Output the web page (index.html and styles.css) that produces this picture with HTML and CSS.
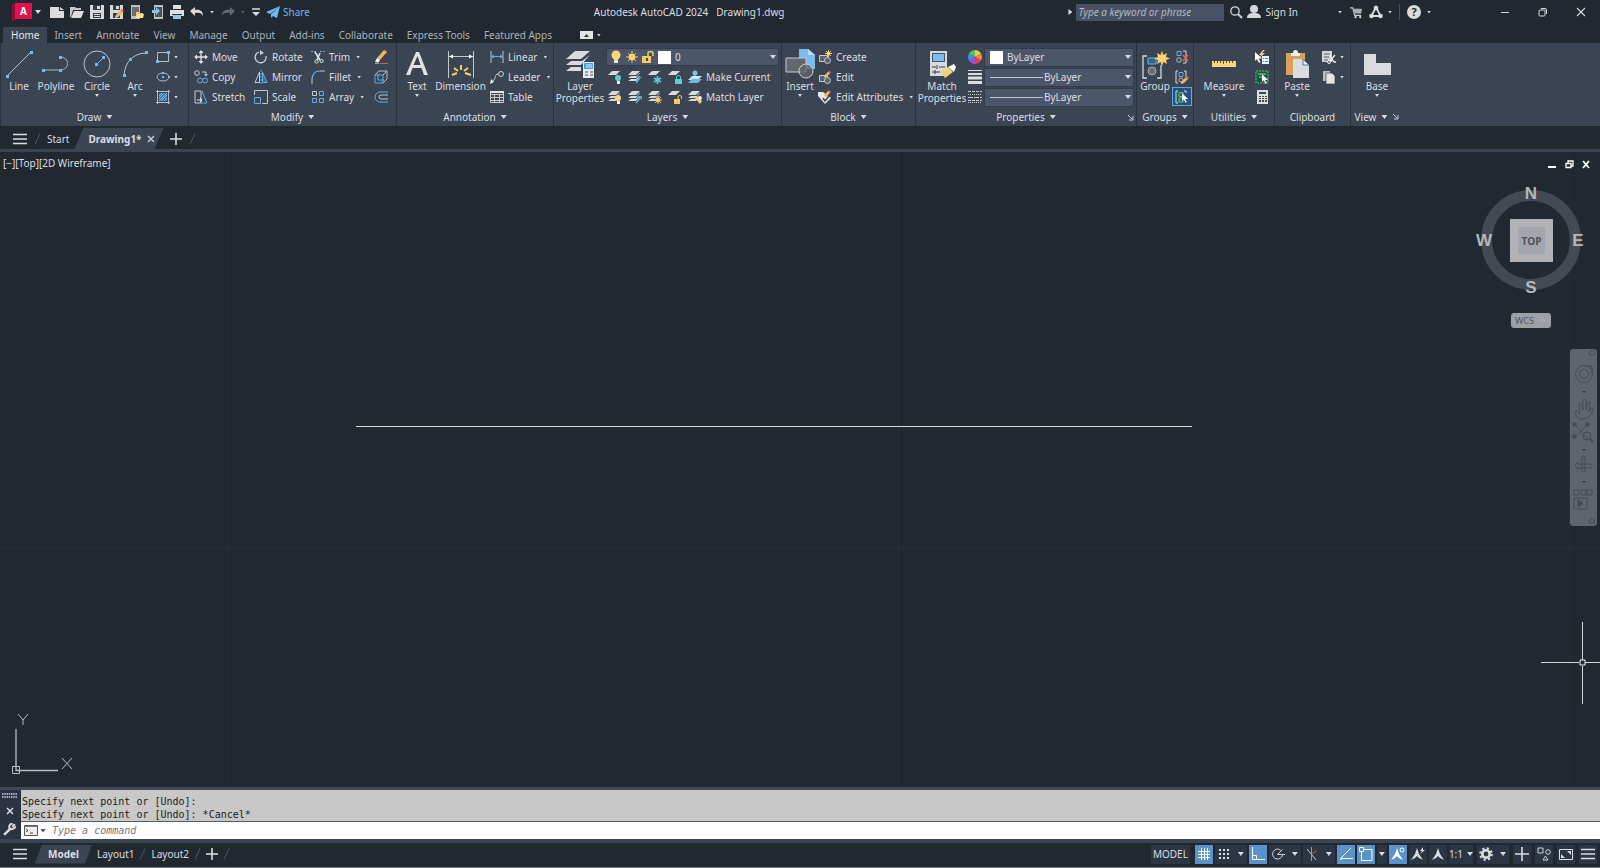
FILE: index.html
```html
<!DOCTYPE html>
<html lang="en">
<head>
<meta charset="utf-8">
<title>Autodesk AutoCAD 2024 - Drawing1.dwg</title>
<link rel="stylesheet" href="styles.css">
</head>
<body>
<svg class="defs" aria-hidden="true">
  <defs>
    <symbol id="lens" viewBox="0 0 14 14"><circle cx="6" cy="6" r="4.2" fill="none" stroke="#d5d7da" stroke-width="1.3"/><path d="M9 9l4 4" stroke="#d5d7da" stroke-width="1.8"/></symbol>
    <symbol id="menu" viewBox="0 0 14 12"><path d="M0 1.500h14M0 6h14M0 10.500h14" stroke="#dcdee0" stroke-width="1.600"/></symbol>
    <symbol id="plus" viewBox="0 0 12 12"><path d="M6 0v12M0 6h12" stroke="#dcdee0" stroke-width="1.600"/></symbol>
    <symbol id="cursor" viewBox="0 0 8 11"><path d="M0 0v9l2-2 2 4 1.500-1-2-3.500H7z" fill="#fff"/></symbol>
    <symbol id="sheets" viewBox="0 0 14 14"><path d="M4 1h8L8 5H0zM3 6h6l2-3 1 0L8 8H0zM3 9h5l3-3h1L8 11H0z" fill="#d8d9db"/></symbol>
    <symbol id="sheet" viewBox="0 0 14 14"><path d="M4 1h8L8 5H0z" fill="#d8d9db"/></symbol>
    <symbol id="pencil" viewBox="0 0 8 8"><path d="M0 8l1-3 2 2z" fill="#f5e4c6"/><path d="M1 5l4-4 2 2-4 4z" fill="#f2b45c"/><path d="M5 1l1-1 2 2-1 1z" fill="#e8654f"/></symbol>
    <symbol id="launch" viewBox="0 0 7 7"><path d="M1 1l4 4M6 2v4H2" fill="none" stroke="#cfd2d6"/></symbol>
  </defs>
</svg>
<div class="app">
  <header class="titlebar">
    <div class="quick">
      <button class="logo" aria-label="Application menu"><svg viewBox="0 0 20 18"><path d="M0 2L4 0h16v16H4l-4 2z" fill="#e51050"/><path d="M0 2L3 0v16l-3 2z" fill="#8e0c33"/></svg><span>A</span></button>
      <span class="caret"></span>
      <button class="q new" aria-label="New"><svg viewBox="0 0 14 14"><path d="M0 2h9v4h5v7H0z" fill="#dcdcdc"/><path d="M10 2l4 3h-4z" fill="#dcdcdc"/></svg></button>
      <button class="q" aria-label="Open"><svg viewBox="0 0 14 14"><path d="M0 2h5l1 1h5v2H3L1 12H0z" fill="#c9c9c9"/><path d="M4 6h10l-3 7H1z" fill="#dcdcdc"/></svg></button>
      <button class="q" aria-label="Save"><svg viewBox="0 0 14 14"><path d="M0 0h14v14H0z" fill="#d8d8d8"/><path d="M3 0h8v5H3zM3 8h8v5H3z" fill="#343d49"/><path d="M7 1h3v3H7zM4 9h6v1H4zM4 11h6v1H4z" fill="#d8d8d8"/></svg></button>
      <button class="q" aria-label="Save as"><svg viewBox="0 0 14 14"><path d="M0 0h13v14H0z" fill="#d8d8d8"/><path d="M3 0h7v5H3zM3 8h7v5H3z" fill="#343d49"/><path d="M6 1h3v3H6z" fill="#d8d8d8"/><use href="#pencil" x="5" y="4" width="9" height="9"/></svg></button>
      <button class="q" aria-label="Open from web"><svg viewBox="0 0 14 14"><path d="M1 0h9v14H1z" fill="#bfc1c4"/><path d="M2 2h7v9H2z" fill="#6c6d6e"/><path d="M6 7h3l1 1h3v5H6z" fill="#f3c667"/><path d="M7 9h7l-1 4H6z" fill="#ffe09a"/></svg></button>
      <button class="q" aria-label="Save to web"><svg viewBox="0 0 14 14"><path d="M4 0h9v14H4z" fill="#bfc1c4"/><path d="M5 2h7v10H5z" fill="#4c5157"/><path d="M2 5h4V2l4 4-4 4V8H2z" fill="#7cc4f4"/></svg></button>
      <button class="q" aria-label="Plot"><svg viewBox="0 0 14 14"><path d="M3 0h8v4H3zM0 5h14v6H0z" fill="#e0e0e0"/><path d="M2 9h10v1H2z" fill="#333"/><path d="M3 10h8v4H3z" fill="#8fc7ea"/></svg></button>
      <button class="q" aria-label="Undo"><svg viewBox="0 0 14 14"><path d="M0 6l5-4v3c5-1 8 1 8 6-1-3-4-4-8-3v3z" fill="#dcdcdc"/></svg></button>
      <span class="caret dot"></span>
      <button class="q dim" aria-label="Redo"><svg viewBox="0 0 14 14"><path d="M14 6L9 2v3C4 4 1 6 1 11c1-3 4-4 8-3v3z" fill="#5f6771"/></svg></button>
      <span class="caret dot dim"></span>
      <button class="q more" aria-label="Customize quick access"><svg viewBox="0 0 8 8"><path d="M0 1h8" stroke="#dcdcdc" stroke-width="1.500"/><path d="M0 4h8L4 8z" fill="#dcdcdc"/></svg></button>
      <button class="share"><svg viewBox="0 0 14 14"><path d="M14 1L0 7l4 2zM14 1L5 9v4l2-2 4 2z" fill="#6fb7ec"/></svg>Share</button>
    </div>
    <h1 class="title"><span>Autodesk AutoCAD 2024</span><span>Drawing1.dwg</span></h1>
    <div class="account">
      <span class="caret right"></span>
      <input class="search" type="text" aria-label="Search" placeholder="Type a keyword or phrase">
      <button class="q" aria-label="Search"><svg><use href="#lens"/></svg></button>
      <button class="signin"><svg viewBox="0 0 14 14"><circle cx="7" cy="4" r="4" fill="#d5d7da"/><path d="M0 13c0-4 3-5 7-5s7 1 7 5z" fill="#d5d7da"/></svg>Sign In</button>
      <span class="caret dot"></span>
      <button class="q cart" aria-label="Store"><svg viewBox="0 0 14 14"><path d="M0 2h3l2 8h7" fill="none" stroke="#c8cace" stroke-width="1.300"/><path d="M4 3h9l-1 5H5z" fill="#a9adb3"/><circle cx="6" cy="12" r="1.200" fill="#ddd"/><circle cx="11" cy="12" r="1.200" fill="#ddd"/></svg></button>
      <button class="q" aria-label="Autodesk App"><svg viewBox="0 0 14 14"><path d="M7 2L2.500 11h9z" fill="none" stroke="#dcdcdc" stroke-width="1.800"/><circle cx="7" cy="3" r="2.300" fill="#dcdcdc"/><circle cx="2.500" cy="11" r="2.300" fill="#dcdcdc"/><circle cx="11.500" cy="11" r="2.300" fill="#dcdcdc"/></svg></button>
      <span class="caret dot"></span>
      <span class="rule"></span>
      <button class="help" aria-label="Help">?</button>
      <span class="caret dot"></span>
      <div class="win">
        <button aria-label="Minimize"><svg viewBox="0 0 10 10"><path d="M1 5.500h8" stroke="#d8dadc"/></svg></button>
        <button aria-label="Restore"><svg viewBox="0 0 10 10"><rect x="1" y="3" width="6" height="6" rx="1" fill="none" stroke="#d8dadc"/><path d="M3 1.500h4q1.500 0 1.500 1.500v4" fill="none" stroke="#d8dadc"/></svg></button>
        <button aria-label="Close"><svg viewBox="0 0 10 10"><path d="M1 1l8 8M9 1l-8 8" stroke="#d8dadc" stroke-width="1.100"/></svg></button>
      </div>
    </div>
  </header>

  <nav class="tabs">
    <button class="on">Home</button><button>Insert</button><button>Annotate</button><button>View</button><button>Manage</button><button>Output</button><button>Add-ins</button><button>Collaborate</button><button>Express Tools</button><button>Featured Apps</button>
    <button class="collapse" aria-label="Minimize ribbon"><svg viewBox="0 0 13 8"><path d="M0 0h13v8H0z" fill="#e3e4e6"/><path d="M4 6l2.500-3L9 6z" fill="#333"/></svg><span class="caret dot"></span></button>
  </nav>

  <main class="ribbon">
    <section class="panel draw">
      <div class="body">
        <button class="big"><svg viewBox="0 0 30 30"><path d="M3 27L27 3" stroke="#c3c6ca"/><path d="M2 26h3v3H2zM26 2h3v3h-3z" fill="#78b9ec"/></svg>Line</button>
        <button class="big wide"><svg viewBox="0 0 30 30"><path d="M3 21h16c10 0 10-13 0-13" fill="none" stroke="#b3b7bd"/><path d="M1 20h3v3H1zM18 20h3v3h-3zM18 7h3v3h-3z" fill="#78b9ec"/></svg>Polyline</button>
        <button class="big circ"><svg viewBox="0 0 30 30"><circle cx="15" cy="15" r="13" fill="none" stroke="#c3c6ca"/><path d="M15 15l6-6" stroke="#78b9ec"/><path d="M13 14h3v3h-3zM20 7h3v3h-3z" fill="#78b9ec"/></svg>Circle<span class="caret dot"></span></button>
        <button class="big"><svg viewBox="0 0 30 30"><path d="M4 26C5 13 13 4 27 4" fill="none" stroke="#c3c6ca"/><path d="M3 25h3v3H3zM9 9h3v3H9zM25 2h3v3h-3z" fill="#78b9ec"/></svg>Arc<span class="caret dot"></span></button>
        <div class="col tight">
          <button class="sm" aria-label="Rectangle"><svg viewBox="0 0 14 14"><path d="M1.500 2.500h11v9h-11z" fill="none" stroke="#b9bdc2"/><path d="M0 10h3v3H0zM11 1h3v3h-3z" fill="#78b9ec"/></svg><span class="caret dot"></span></button>
          <button class="sm" aria-label="Ellipse"><svg viewBox="0 0 14 14"><ellipse cx="7" cy="7" rx="6" ry="4" fill="none" stroke="#b9bdc2"/><path d="M6 6h2v2H6zM6 2h2v2H6zM12 6h2v2h-2z" fill="#78b9ec"/></svg><span class="caret dot"></span></button>
          <button class="sm" aria-label="Hatch"><svg viewBox="0 0 14 14"><path d="M3 3h8v8H3z" fill="#3f77a8"/><path d="M1.500 0v14M12.500 0v14M0 1.500h14M0 12.500h14" stroke="#b9bdc2"/><path d="M3 6l3-3M3 11l8-8M8 11l3-3M3 8l5-5M5 11l6-6" stroke="#6fb7ec"/></svg><span class="caret dot"></span></button>
        </div>
      </div>
      <h2>Draw<span class="caret"></span></h2>
    </section>

    <section class="panel modify">
      <div class="body">
        <div class="col c1">
          <button class="sm"><svg viewBox="0 0 14 14"><path d="M7 2v10M2 7h10" stroke="#e1e2e4" stroke-width="1.300"/><path d="M4.500 3L7 0l2.500 3zM4.500 11L7 14l2.500-3zM3 4.500L0 7l3 2.500zM11 4.500L14 7l-3 2.500z" fill="#e1e2e4"/></svg>Move</button>
          <button class="sm"><svg viewBox="0 0 14 14"><circle cx="3" cy="3" r="2.300" fill="none" stroke="#ccc"/><path d="M8 2h4v4M10.500 4L12 6l1.500-2" fill="none" stroke="#ccc"/><circle cx="6" cy="10.500" r="2.500" fill="none" stroke="#65aee6"/><circle cx="11" cy="10.500" r="2.500" fill="none" stroke="#65aee6"/></svg>Copy</button>
          <button class="sm"><svg viewBox="0 0 14 14"><path d="M1 1h6v12H1z" fill="none" stroke="#ccc"/><path d="M8 1l5 12H7" fill="none" stroke="#65aee6"/><path d="M3 10h5M6 8l2 2-2 2" fill="none" stroke="#eee"/></svg>Stretch</button>
        </div>
        <div class="col c2">
          <button class="sm"><svg viewBox="0 0 14 14"><path d="M5 2a5.500 5.500 0 1 0 7 4" fill="none" stroke="#d0d2d5" stroke-width="1.300"/><path d="M6 0v5l4-2z" fill="#d0d2d5"/></svg>Rotate</button>
          <button class="sm"><svg viewBox="0 0 14 14"><path d="M5.500 2v10.500H1z" fill="none" stroke="#c5c8cc"/><path d="M8.500 2v10.500H13z" fill="#2f6da6" stroke="#65aee6"/><path d="M7 0v14" stroke="#65aee6" stroke-dasharray="2 1"/></svg>Mirror</button>
          <button class="sm"><svg viewBox="0 0 14 14"><path d="M.5 5V.5h13v13H8" fill="none" stroke="#c5c8cc"/><path d="M.5 7.500h6v6h-6z" fill="none" stroke="#65aee6"/></svg>Scale</button>
        </div>
        <div class="col c3">
          <button class="sm"><svg viewBox="0 0 14 14"><path d="M0 1.500h6M9 1.500h5" stroke="#65aee6" stroke-dasharray="2 1"/><path d="M4 2l5 8M9 3L6 10" stroke="#e4e5e7" stroke-width="1.500"/><circle cx="5.500" cy="11.500" r="1.600" fill="none" stroke="#e4e5e7"/><circle cx="10.500" cy="11" r="1.600" fill="none" stroke="#e4e5e7"/></svg>Trim<span class="caret dot"></span></button>
          <button class="sm"><svg viewBox="0 0 14 14"><path d="M1 14V9" stroke="#c5c8cc"/><path d="M1 10C1 4 4 1 9 1" fill="none" stroke="#65aee6" stroke-width="1.200"/><path d="M9 1h5" stroke="#c5c8cc"/></svg>Fillet<span class="caret dot"></span></button>
          <button class="sm"><svg viewBox="0 0 14 14"><path d="M1.500 1.500h4v4h-4z" fill="none" stroke="#ccc"/><path d="M8.500 1.500h4v4h-4zM1.500 8.500h4v4h-4zM8.500 8.500h4v4h-4z" fill="none" stroke="#65aee6"/></svg>Array<span class="caret dot"></span></button>
        </div>
        <div class="col">
          <button class="sm" aria-label="Erase"><svg viewBox="0 0 14 14"><path d="M3 8l7-8 3 2-7 8z" fill="#f2b45c"/><path d="M10 0l1-0 2 1.500-0.500 1z" fill="#e8654f"/><path d="M3 8l3 2-1.500 2.500L1 12z" fill="#fff"/><path d="M1 13.500h4" stroke="#65aee6"/><path d="M6 13.500h8" stroke="#e65b4c"/></svg></button>
          <button class="sm" aria-label="Explode"><svg viewBox="0 0 14 14"><path d="M1 5h8v8H1z" fill="none" stroke="#65aee6"/><path d="M1 5l4-4h8v8l-4 4M9 5l4-4" fill="none" stroke="#bfc2c7"/><path d="M4 4v6h6" fill="none" stroke="#65aee6"/></svg></button>
          <button class="sm" aria-label="Offset"><svg viewBox="0 0 14 14"><path d="M14 2H6a5 5 0 0 0 0 10h8" fill="none" stroke="#65aee6"/><path d="M14 5H7a2 2 0 0 0 0 4h7" fill="none" stroke="#c5c8cc"/></svg></button>
        </div>
      </div>
      <h2>Modify<span class="caret"></span></h2>
    </section>

    <section class="panel annotation">
      <div class="body">
        <button class="big text"><svg viewBox="0 0 30 30"><path d="M14 3h3l9 23h-4l-2.500-7h-9L8 26H4zm1.500 4L11.500 16h7z" fill="#e1e2e4"/></svg>Text<span class="caret dot"></span></button>
        <button class="big dimn"><svg viewBox="0 0 30 30"><path d="M2.500 2v27M27.500 2v27M3 7.500h24" stroke="#c5c8cc"/><path d="M3 7.500l4-2v4zM27 7.500l-4-2v4z" fill="#fff"/><path d="M6 26l5-2M8 19l4 3M15 16v5M22 19l-4 3M25 26l-6-2" stroke="#f6cf6b" stroke-width="2"/></svg>Dimension</button>
        <div class="col">
          <button class="sm"><svg viewBox="0 0 14 14"><path d="M1 1v12M13 1v12" stroke="#c5c8cc"/><path d="M1 6.500h12" stroke="#65aee6"/><path d="M1 6.500l3-2v4zM13 6.500l-3-2v4z" fill="#65aee6"/></svg>Linear<span class="caret dot"></span></button>
          <button class="sm"><svg viewBox="0 0 14 14"><circle cx="11" cy="4" r="2.500" fill="none" stroke="#ccc"/><path d="M8.500 4C4 4 7 8 2 12" fill="none" stroke="#ccc"/><path d="M0 14l1-5 3 3z" fill="#eee"/></svg>Leader<span class="caret dot"></span></button>
          <button class="sm"><svg viewBox="0 0 14 14"><path d="M.5 1.500h13v11H.5zM.5 4.500h13M.5 7.500h13M.5 10.500h13M4.500 4v9M9.500 4v9" fill="none" stroke="#c9cbcf"/><path d="M0 1h14v2H0z" fill="#e3e4e6"/></svg>Table</button>
        </div>
      </div>
      <h2>Annotation<span class="caret"></span></h2>
    </section>

    <section class="panel layers">
      <div class="body">
        <button class="big lp"><svg viewBox="0 0 30 30"><path d="M10 2h15l-9 8H1zM6 12h11l8-6-9 10H1zM6 18h10v4H1z" fill="#dadbdd"/><path d="M18 13h11v16H18z" fill="#e9eaeb"/><path d="M19 14h9v6h-9z" fill="#4f9fdc"/><path d="M21 15h6v4h-6z" fill="#8cc8f4"/><path d="M20 23h3M25 23h3M20 26h3M25 26h3" stroke="#454e5b"/></svg>Layer Properties</button>
        <div class="stack">
          <div class="combo layer">
            <svg viewBox="0 0 12 14"><circle cx="6" cy="5" r="4.500" fill="#ffd778"/><path d="M4 9h4v2H4z" fill="#ffd778"/><path d="M4 11h4v2H4z" fill="#e4e5e7"/></svg>
            <svg viewBox="0 0 12 14"><circle cx="6" cy="7" r="3.300" fill="#ffd778"/><path d="M6 1v12M0 7h12M2 3l8 8M10 3l-8 8" stroke="#f6c968"/></svg>
            <svg viewBox="0 0 12 14"><path d="M0 6h9v7H0z" fill="#f6c968"/><path d="M6 6V3.500q0-2 2.500-2t2.500 2V6" fill="none" stroke="#f6c968" stroke-width="1.500"/><path d="M4 8h2v3H4z" fill="#51452c"/></svg>
            <span class="swatch"></span>
            <select aria-label="Layer"><option>0</option></select><span class="caret"></span>
          </div>
          <div class="toolrow">
            <button class="sm" aria-label="Off"><svg viewBox="0 0 14 14"><use href="#sheet"/><circle cx="10" cy="8" r="3" fill="#62cbd1"/><path d="M9 11h3v3H9z" fill="#d8f3f3"/></svg></button>
            <button class="sm" aria-label="Isolate"><svg viewBox="0 0 14 14"><use href="#sheets"/><path d="M14 6l-5 7-1 0 0-3z" fill="#6bb3ea"/></svg></button>
            <button class="sm" aria-label="Freeze"><svg viewBox="0 0 14 14"><use href="#sheet"/><path d="M9.500 6v8M6 8l7 4M13 8l-7 4" stroke="#62cbd1" stroke-width="1.700"/></svg></button>
            <button class="sm" aria-label="Lock"><svg viewBox="0 0 14 14"><use href="#sheet"/><path d="M7 9h7v5H7z" fill="#62cbd1"/><path d="M8.500 9V7q0-1.500 2-1.500t2 1.500v2" fill="none" stroke="#62cbd1"/></svg></button>
            <button class="sm"><svg viewBox="0 0 14 14"><path d="M4 6h10l-4 4H0z" fill="#c6e4fa"/><path d="M4 9h10l-4 4H0z" fill="#71b6ea"/><circle cx="7" cy="3" r="2.500" fill="#81c0ee"/><path d="M4 7q3-3 6 0z" fill="#eee"/></svg>Make Current</button>
          </div>
          <div class="toolrow">
            <button class="sm" aria-label="Turn all on"><svg viewBox="0 0 14 14"><use href="#sheets"/><circle cx="10" cy="8" r="3" fill="#ffd778"/><path d="M9 11h3v3H9z" fill="#eee"/></svg></button>
            <button class="sm" aria-label="Unisolate"><svg viewBox="0 0 14 14"><use href="#sheets"/><path d="M8 13l5-6M10 7h4v3" fill="none" stroke="#6bb3ea" stroke-width="1.300"/></svg></button>
            <button class="sm" aria-label="Thaw"><svg viewBox="0 0 14 14"><use href="#sheets"/><circle cx="10" cy="10" r="2" fill="#ffd778"/><path d="M10 6v8M6 10h8M7 7l6 6M13 7l-6 6" stroke="#f6c968"/></svg></button>
            <button class="sm" aria-label="Unlock"><svg viewBox="0 0 14 14"><use href="#sheet"/><path d="M6 9h6v5H6z" fill="#f6c968"/><path d="M10 9V7q0-1.500 1.700-1.500T13.500 7v2" fill="none" stroke="#f6c968"/></svg></button>
            <button class="sm"><svg viewBox="0 0 14 14"><use href="#sheets"/><path d="M6 7l3-1 5 5-2 3z" fill="#f3d277"/><path d="M10 7l3-1 1 3-2 1z" fill="#fff"/></svg>Match Layer</button>
          </div>
        </div>
      </div>
      <h2>Layers<span class="caret"></span></h2>
    </section>

    <section class="panel block">
      <div class="body">
        <button class="big ins"><svg viewBox="0 0 30 30"><path d="M14 0h9l7 6v14H14z" fill="#7cbcec"/><path d="M23 0l7 6h-7z" fill="#b8dcf7"/><path d="M1 9h20v14H1z" fill="#62676e" stroke="#c8cacd"/><circle cx="21" cy="22" r="7" fill="#62676e" fill-opacity=".8" stroke="#d0d2d4"/></svg>Insert<span class="caret dot"></span></button>
        <div class="col">
          <button class="sm"><svg viewBox="0 0 14 14"><path d="M1.500 5.500h8v6h-8z" fill="#5d636b" stroke="#c8cacd"/><circle cx="9.500" cy="10.500" r="3" fill="#5d636b" stroke="#c8cacd"/><path d="M10.500 0v7M7 3.500h7M8 1l5 5M13 1L8 6" stroke="#f8d47a"/></svg>Create</button>
          <button class="sm"><svg viewBox="0 0 14 14"><path d="M1.500 5.500h8v6h-8z" fill="#5d636b" stroke="#c8cacd"/><circle cx="9.500" cy="10.500" r="3" fill="#5d636b" stroke="#c8cacd"/><use href="#pencil" x="6" width="7" height="8"/></svg>Edit</button>
          <button class="sm"><svg viewBox="0 0 14 14"><path d="M0 2h5l8 6-6 6-7-8z" fill="#e5e6e8"/><path d="M5 8l2 3 4-5" fill="none" stroke="#3b4453" stroke-width="1.500"/><use href="#pencil" x="5" width="8" height="8"/></svg>Edit Attributes<span class="caret dot"></span></button>
        </div>
      </div>
      <h2>Block<span class="caret"></span></h2>
    </section>

    <section class="panel props">
      <div class="body">
        <button class="big lp"><svg viewBox="0 0 30 30"><path d="M3 2h17v25H3z" fill="#d9dadc"/><path d="M5 4h13v9H5z" fill="#405a72"/><path d="M6 5h11v7H6z" fill="#7dbcec"/><path d="M5 18h4M12 18h6M5 23h8M10 16v4M8 21v4" stroke="#333c48"/><path d="M14 23l7-5 5 5-8 6z" fill="#f3d277"/><path d="M21 18l6-3 2 3-2 5z" fill="#fff"/></svg>Match Properties</button>
        <div class="stack">
          <div class="proprow"><svg viewBox="0 0 14 14"><path d="M7 7V0a7 7 0 0 1 6 3.500z" fill="#f6c543"/><path d="M7 7l6-3.500a7 7 0 0 1 0 7z" fill="#f28b2c"/><path d="M7 7l6 3.500A7 7 0 0 1 7 14z" fill="#e5395d"/><path d="M7 7v7a7 7 0 0 1-6-3.500z" fill="#a04fd6"/><path d="M7 7l-6 3.500a7 7 0 0 1 0-7z" fill="#3596e8"/><path d="M7 7L1 3.500A7 7 0 0 1 7 0z" fill="#5fc24f"/></svg>
            <div class="combo color"><span class="swatch"></span><select aria-label="Object color"><option>ByLayer</option></select><span class="caret"></span></div></div>
          <div class="proprow"><svg viewBox="0 0 14 14"><path d="M0 .5h14" stroke="#ddd"/><path d="M0 4h14" stroke="#ddd" stroke-width="2"/><path d="M0 8h14M0 12.500h14" stroke="#ddd" stroke-width="3"/></svg>
            <div class="combo"><span class="sample"></span><select aria-label="Lineweight"><option>ByLayer</option></select><span class="caret"></span></div></div>
          <div class="proprow"><svg viewBox="0 0 14 14"><path d="M0 1.500h14M0 10.500h14" stroke="#ccc" stroke-dasharray="3 1"/><path d="M0 4.500h14M0 12.500h14" stroke="#ccc" stroke-dasharray="1 1"/><path d="M0 7.500h14" stroke="#ccc" stroke-dasharray="5 1"/></svg>
            <div class="combo"><span class="sample"></span><select aria-label="Linetype"><option>ByLayer</option></select><span class="caret"></span></div></div>
        </div>
      </div>
      <h2>Properties<span class="caret"></span><button class="corner" aria-label="Properties palette"><svg><use href="#launch"/></svg></button></h2>
    </section>

    <section class="panel groups">
      <div class="body">
        <button class="big grp"><svg viewBox="0 0 30 30"><path d="M7 7H3v22h4M17 29h4V16" fill="none" stroke="#d6d8da" stroke-width="1.300"/><path d="M8 9h8v6H8z" fill="#35608a" stroke="#65aee6"/><circle cx="12" cy="22" r="4" fill="#6c7177" stroke="#aaa"/><path d="M22 2l1.500 4L27 4l-1 4 4 1.500-4 1.500 1 4-3.500-2L22 17l-1.500-4L17 15l1-4-4-1.500L18 8l-1-4 3.500 2z" fill="#fbd273"/></svg>Group</button>
        <div class="col">
          <button class="sm" aria-label="Ungroup"><svg viewBox="0 0 14 14"><path d="M2 1.500h4v4H2z" fill="none" stroke="#65aee6"/><circle cx="4" cy="10" r="2.300" fill="none" stroke="#bbb"/><path d="M8 1h3v12H8" fill="none" stroke="#ddd"/><path d="M8 5l5 6M13 5l-5 6" stroke="#e65b5b" stroke-width="1.500"/></svg></button>
          <button class="sm" aria-label="Group edit"><svg viewBox="0 0 14 14"><path d="M3 1H1v12h2M9 1h2v6" fill="none" stroke="#ddd"/><path d="M4 2.500h4v4H4z" fill="none" stroke="#65aee6"/><circle cx="6" cy="10" r="2" fill="none" stroke="#bbb"/><use href="#pencil" x="6" y="6" width="8" height="8"/></svg></button>
          <button class="sm hot" aria-label="Group selection"><svg viewBox="0 0 14 14"><path d="M3 1H1v12h2M9 1h2v2" fill="none" stroke="#ddd"/><path d="M4 2.500h4v4H4zM4 8h4v4H4z" fill="#246b45" stroke="#5ac985"/><use href="#cursor" x="7" y="3" width="7" height="10"/></svg></button>
        </div>
      </div>
      <h2>Groups<span class="caret"></span></h2>
    </section>

    <section class="panel utils">
      <div class="body">
        <button class="big meas"><svg viewBox="0 0 30 30"><path d="M3 12h24v6H3z" fill="#f8d47a"/><path d="M5.500 12v2M8.500 12v2M11.500 12v2M14.500 12v3M17.500 12v2M20.500 12v2M23.500 12v2" stroke="#5e553f"/></svg>Measure<span class="caret dot"></span></button>
        <div class="col">
          <button class="sm" aria-label="Quick select"><svg viewBox="0 0 14 14"><path d="M8 0L4 5h2L4 8l6-5H7l3-3z" fill="#f8d47a"/><use href="#cursor" y="2" width="8" height="11"/><path d="M7 6h7v8H7z" fill="#e8f3fb"/><path d="M8 8.500h1M10 8.500h3M8 11.500h1M10 11.500h3" stroke="#3f8fd0"/></svg></button>
          <button class="sm" aria-label="Select all"><svg viewBox="0 0 14 14"><path d="M1 1h12v12H1z" fill="#21563d" stroke="#4fc27c" stroke-dasharray="2 1"/><path d="M3 4h8M4 7h4v3" fill="none" stroke="#4fc27c" stroke-width="1.500"/><use href="#cursor" x="7" y="4" width="7" height="10"/></svg></button>
          <button class="sm" aria-label="Calculator"><svg viewBox="0 0 14 14"><path d="M2 0h11v14H2z" fill="#dedfe1"/><path d="M4 2h7v2H4zM4 6h2v1H4zM7 6h2v1H7zM10 6h2v1h-2zM4 8h2v1H4zM7 8h2v1H7zM10 8h2v1h-2zM4 10h2v2H4zM7 10h2v2H7zM10 10h2v2h-2z" fill="#3f4855"/></svg></button>
        </div>
      </div>
      <h2>Utilities<span class="caret"></span></h2>
    </section>

    <section class="panel clip">
      <div class="body">
        <button class="big"><svg viewBox="0 0 30 30"><path d="M4 4h19v22H4z" fill="#d9a05b"/><path d="M9 4h2q0-3 2.500-3T16 4h2v3H9z" fill="#f0f0f0"/><path d="M11 10h10l6 6v13H11z" fill="#dcdddf"/><path d="M21 10l6 6h-6z" fill="#fff" stroke="#48719a"/></svg>Paste<span class="caret dot"></span></button>
        <div class="col tight">
          <button class="sm" aria-label="Cut"><svg viewBox="0 0 14 14"><path d="M0 1h10v11H0z" fill="#d5d6d8"/><path d="M2 4h6M2 7h6M2 10h4" stroke="#555e6a"/><path d="M7 5l5 7M13 5l-5 6" stroke="#eee" stroke-width="1.300"/><circle cx="7" cy="12" r="1.500" fill="#555e6a" stroke="#eee"/><circle cx="13" cy="12" r="1" fill="#eee"/></svg><span class="caret dot"></span></button>
          <button class="sm" aria-label="Copy"><svg viewBox="0 0 14 14"><path d="M1 1h7v10H1z" fill="#babcbf"/><path d="M4 3h6l3 3v8H4z" fill="#e3e4e6" stroke="#3b4453" stroke-width=".7"/></svg><span class="caret dot"></span></button>
        </div>
      </div>
      <h2>Clipboard</h2>
    </section>

    <section class="panel view">
      <div class="body">
        <button class="big"><svg viewBox="0 0 30 30"><path d="M2 5h12v9h15v12H2z" fill="#d9dadc"/></svg>Base<span class="caret dot"></span></button>
      </div>
      <h2>View<span class="caret"></span><button aria-label="View settings"><svg><use href="#launch"/></svg></button></h2>
    </section>
  </main>

  <nav class="files">
    <button class="burger" aria-label="Tab menu"><svg><use href="#menu"/></svg></button>
    <span class="slash"></span>
    <button>Start</button>
    <div class="active"><span>Drawing1*</span><button aria-label="Close tab"><svg viewBox="0 0 8 8"><path d="M1 1l6 6M7 1L1 7" stroke="#c6c9cd" stroke-width="1.500"/></svg></button></div>
    <button class="add" aria-label="New tab"><svg><use href="#plus"/></svg></button>
    <span class="slash"></span>
  </nav>

  <section class="canvas" aria-label="Drawing area">
    <div class="grid v a"></div><div class="grid v b"></div><div class="grid v c"></div><div class="grid h"></div>
    <div class="viewlabel"><button>[−]</button><button>[Top]</button><button>[2D Wireframe]</button></div>
    <div class="viewwin">
      <button aria-label="Minimize view"><svg viewBox="0 0 9 9"><path d="M0 7h8" stroke="#fff" stroke-width="2"/></svg></button>
      <button aria-label="Restore view"><svg viewBox="0 0 9 9"><path d="M1 3.500h5v4H1zM3 3V1h5v5H6" fill="none" stroke="#fff" stroke-width="1.300"/></svg></button>
      <button aria-label="Close view"><svg viewBox="0 0 9 9"><path d="M1 1l6 7M7 1L1 8" stroke="#fff" stroke-width="1.800"/></svg></button>
    </div>
    <div class="line"></div>
    <div class="cube">
      <span class="n">N</span><span class="w">W</span><span class="e">E</span><span class="s">S</span>
      <button class="top">TOP</button>
    </div>
    <button class="wcs">WCS <svg viewBox="0 0 8 6"><path d="M1 3q3-3 6 0" fill="none" stroke="#b4b7bc"/></svg></button>
    <div class="navbar">
      <svg viewBox="0 0 27 177" fill="none" stroke="#454b55">
        <circle cx="22" cy="4" r="2.500"/><circle cx="22" cy="172" r="2.500"/>
        <circle cx="14" cy="25" r="8.500"/><circle cx="14" cy="25" r="4.500"/><path d="M17 17h5v7"/>
        <path d="M12 42h4l-2 2zM12 100h4l-2 2zM12 132h4l-2 2z" fill="#30363f" stroke="none"/>
        <path d="M9 70c-4-4-5-7-3-8 2 0 3 3 4 3l-1-10c1-2 2-1 3 1l1 5V52c1-2 3-2 3 0v9l2-8c2-1 3 0 2 2l-1 8 2-4c2-1 3 0 2 2-2 6-4 9-14 9z"/>
        <path d="M5 76l13 14M17 76L5 88"/><path d="M3 74h3v3H3zM16 74h3v3h-3zM3 86h3v3H3z" fill="#454b55"/><circle cx="17" cy="87" r="4"/><path d="M20 90l3 3" stroke-width="2"/>
        <path d="M12 108q2-2 3 0v14q-1 3-3 0zM5 116l3-3v2h12q4 1 1 4H8v2z"/>
        <path d="M4 141h5v5H4zM11 141h5v5h-5zM17 141h5v5h-5zM4 149h13v11H4z"/><path d="M8 151v7l5-3.500z" fill="#454b55"/>
      </svg>
    </div>
    <svg class="cross" viewBox="0 0 59 82"><path d="M0 40.500h38M44 40.500h16M41.500 0v38M41.500 44v38" stroke="#d2d4d6"/><path d="M39 38h5v5h-5z" fill="none" stroke="#f0f0f0"/></svg>
    <svg class="ucs" viewBox="0 0 70 64" fill="none" stroke="#b8bbbf"><path d="M8 17v41.500h42" stroke-width="1.300"/><path d="M4.500 54.500h7v7h-7z"/><path d="M10 2l5 6 5-6M15 8v5M54 46l10 11M64 46L54 57"/></svg>
  </section>

  <section class="command">
    <div class="grip">
      <svg viewBox="0 0 15 5"><path d="M0 1h15M0 4h15" stroke="#cfd1d4" stroke-width="1.500" stroke-dasharray="1.500 .75"/></svg>
      <button aria-label="Close"><svg viewBox="0 0 8 8"><path d="M1 1l6 6M7 1L1 7" stroke="#dcdee0" stroke-width="1.500"/></svg></button>
      <button aria-label="Customize"><svg viewBox="0 0 12 12"><path d="M1 11l6-6" stroke="#dcdee0" stroke-width="2.200"/><path d="M11 1L8.500 3.500M9 0.500Q5 1 6 5q3 2 6-2" fill="none" stroke="#dcdee0" stroke-width="1.800"/></svg></button>
    </div>
    <div class="console">
      <pre>Specify next point or [Undo]:
Specify next point or [Undo]: *Cancel*</pre>
      <div class="prompt">
        <button aria-label="Recent commands"><svg viewBox="0 0 14 11"><path d="M.5.500h13v10H.5z" fill="#eee" stroke="#555"/><path d="M1 1.500h12" stroke="#777"/><path d="M2 4l2 1.500L2 7M6 8h3" fill="none" stroke="#444"/></svg><span class="caret"></span></button>
        <input type="text" aria-label="Command" placeholder="Type a command">
      </div>
    </div>
  </section>

  <footer class="status">
    <nav class="layouts">
      <button class="burger" aria-label="Layout menu"><svg><use href="#menu"/></svg></button>
      <button class="model">Model</button>
      <button>Layout1</button><span class="slash"></span>
      <button>Layout2</button><span class="slash"></span>
      <button class="add" aria-label="New layout"><svg><use href="#plus"/></svg></button><span class="slash"></span>
    </nav>
    <div class="modes">
      <button class="space">MODEL</button>
      <button class="hl" aria-label="Grid"><svg viewBox="0 0 14 14"><path d="M4.500 1v12M7.500 1v12M10.500 1v12M1 4.500h12M1 7.500h12M1 10.500h12" stroke="#fff"/></svg></button>
      <button class="dd" aria-label="Snap"><svg viewBox="0 0 14 14"><path d="M2 3h12M2 7h12M2 11h12" stroke="#dcdee0" stroke-width="2" stroke-dasharray="2 2"/></svg><span class="caret"></span></button>
      <button class="hl" aria-label="Ortho"><svg viewBox="0 0 14 14"><path d="M1.500 0v12.500H14M1.500 8.500h4v4" fill="none" stroke="#fff"/></svg></button>
      <button class="dd" aria-label="Polar"><svg viewBox="0 0 14 14"><path d="M11.500 8a5 5 0 1 1-2-5M6.500 7.500l5-5M6.500 7.500H14" fill="none" stroke="#cfd1d4"/></svg><span class="caret"></span></button>
      <button class="dd" aria-label="Isometric"><svg viewBox="0 0 14 14"><path d="M6.500 0v14" stroke="#88a888"/><path d="M2 2l9 11" stroke="#c7c9cc"/><path d="M6 7l6-3" stroke="#b1655c"/></svg><span class="caret"></span></button>
      <button class="hl" aria-label="Tracking"><svg viewBox="0 0 14 14"><path d="M12 1L1.500 11.500H14" fill="none" stroke="#fff"/><path d="M1 11h2v2H1z" fill="#b8ecc5"/></svg></button>
      <button class="hl" aria-label="Object snap"><svg viewBox="0 0 14 14"><path d="M5 2.500h8v11H2.500V5" fill="none" stroke="#fff"/><path d="M.5.500h4v4h-4z" fill="none" stroke="#fff"/></svg></button>
      <button class="only" aria-label="Object snap options"><span class="caret"></span></button>
      <button class="hl" aria-label="Annotation visibility"><svg viewBox="0 0 14 14"><path d="M6 1l2 6 4 6-4-2-2-2-2 2-4 2 4-6z" fill="#fff"/><circle cx="11" cy="3" r="2" fill="none" stroke="#fff"/></svg></button>
      <button aria-label="Auto scale"><svg viewBox="0 0 14 14"><path d="M6 1l2 6 4 6-4-2-2-2-2 2-4 2 4-6z" fill="#dcdee0"/><path d="M12 0L9 4h2L9 7l5-4h-2z" fill="#dcdee0"/></svg></button>
      <button aria-label="Annotation scale"><svg viewBox="0 0 14 14"><path d="M7 1l2 6 4 6-4-2-2-2-2 2-4 2 4-6z" fill="#dcdee0"/></svg></button>
      <button class="scale">1:1<span class="caret"></span></button>
      <button class="dd far" aria-label="Workspace"><svg viewBox="0 0 14 14"><circle cx="7" cy="7" r="3.700" fill="none" stroke="#dcdee0" stroke-width="2.600"/><circle cx="7" cy="7" r="5.800" fill="none" stroke="#dcdee0" stroke-width="2" stroke-dasharray="2.280 2.280"/></svg><span class="caret"></span></button>
      <button class="far" aria-label="Add"><svg viewBox="0 0 14 14"><path d="M7 0v14M0 7h14" stroke="#dcdee0" stroke-width="1.600"/></svg></button>
      <button class="far" aria-label="Isolate objects"><svg viewBox="0 0 14 14"><path d="M1 1h5v5H1zM6 13l2.500-4 2.500 4z" fill="none" stroke="#cfd1d4"/><circle cx="11" cy="5" r="2.300" fill="none" stroke="#cfd1d4"/></svg></button>
      <button class="far" aria-label="Clean screen"><svg viewBox="0 0 14 14"><path d="M.5 2.500h13v10H.5z" fill="none" stroke="#dcdee0"/><path d="M8 4h4v4zM2 11V7l4 4z" fill="#dcdee0"/></svg></button>
      <button class="far" aria-label="Customization"><svg><use href="#menu"/></svg></button>
    </div>
  </footer>
</div>
</body>
</html>
```
FILE: styles.css
```css
* { box-sizing: border-box; }
body {
  margin: 0;
  background: #212830;
  color: #dcdee1;
  font: 10px/14px "Noto Sans", "Open Sans", sans-serif;
}
button, input, select {
  margin: 0; padding: 0; border: 0; background: none;
  color: inherit; font: inherit; outline: 0;
}
button { display: flex; align-items: center; white-space: nowrap; }
svg { display: block; flex: none; width: 14px; height: 14px; }
.defs { position: absolute; width: 0; height: 0; }
.app { display: flex; flex-direction: column; height: 100vh; overflow: hidden; }

.caret {
  flex: none; width: 6px; height: 4px;
  background: #d8dadd; clip-path: polygon(0 0, 100% 0, 50% 100%);
}
.caret.dot { width: 4px; height: 3px; }
.caret.dim { background: #59616c; }
.caret.right { width: 4px; height: 6px; clip-path: polygon(0 0, 100% 50%, 0 100%); }

/* title bar */
.titlebar { display: flex; align-items: center; height: 24px; flex: none; }
.quick { display: flex; align-items: center; gap: 6px; padding-left: 12px; }
.logo { position: relative; width: 20px; height: 18px; margin-right: -3px; }
.logo svg { width: 20px; height: 18px; }
.logo span { position: absolute; left: 8px; top: 1px; font-weight: 700; color: #fff; }
.q.new { margin-left: 3px; }
.quick .caret.dot { margin: 0 1px 0 0; }
.more svg { width: 8px; height: 8px; }
.share { gap: 3px; color: #6fb7ec; }
.title { display: flex; flex: 1; justify-content: center; gap: 8px; margin: 0; font-size: 10px; font-weight: 400; }
.account { display: flex; align-items: center; }
.search { width: 148px; height: 17px; margin: 0 5px 0 4px; padding: 0 2px; background: #475163; font-style: italic; }
.search::placeholder { color: #b3b8c0; opacity: 1; }
.signin { gap: 4px; margin: 0 40px 0 4px; }
.q.cart { margin: 0 6px 0 8px; }
.q.cart svg { width: 13px; height: 13px; }
.q + .caret { margin-left: 5px; }
.rule { width: 1px; height: 16px; margin: 0 7px; background: #4a525d; }
.help { justify-content: center; width: 14px; height: 14px; margin-right: 6px; border-radius: 50%; background: #dcdcdc; color: #212830; font-size: 11px; font-weight: 700; }
.win { display: flex; gap: 27px; margin: 0 13px 0 69px; }
.win svg { width: 10px; height: 10px; }
.win button { padding-right: 1px; }

/* ribbon tabs */
.tabs { display: flex; flex: none; height: 19px; padding: 3px 0 0 3px; color: #aeb2b8; }
.tabs button { height: 16px; padding: 0 7px; }
.tabs .on { padding: 0 8px; background: #3b4453; color: #e4e6e8; }
.tabs .collapse { gap: 4px; margin-left: 14px; }
.collapse svg { width: 13px; height: 8px; }

/* ribbon */
.ribbon { display: flex; flex: none; background: #3b4453; border-left: 1px solid #2b333f; }
.panel { display: flex; flex-direction: column; flex: none; height: 83px; padding-top: 4px; border-right: 1px solid #2a323e; }
.body { display: flex; flex: 1; padding-left: 3px; }
.panel h2 {
  display: flex; position: relative; align-items: center; justify-content: center; gap: 5px;
  height: 19px; margin: 0; font-size: 10px; font-weight: 400;
}
.panel h2 .caret { margin-top: 1px; }
.corner { position: absolute; right: 2px; top: 7px; }
h2 svg { width: 7px; height: 7px; }
.big {
  flex-direction: column; flex: none; width: 34px; padding-top: 2px;
  line-height: 12px; text-align: center; white-space: normal; align-self: flex-start;
}
.big > svg { width: 30px; height: 30px; margin-bottom: 1px; }
.big .caret { margin-top: 2px; }
.col { display: grid; grid-template-rows: repeat(3, 20px); align-content: start; justify-items: start; }
.sm { gap: 4px; height: 20px; }
.sm .caret { margin-left: 2px; }
.tight .caret { margin-left: 0; }

.draw { width: 188px; }
.draw .body { padding-left: 1px; }
.draw .wide { width: 40px; }
.draw .circ { width: 42px; }
.draw .col { margin-left: 4px; }
.modify { width: 208px; }
.modify .body { padding-left: 5px; }
.c1 { width: 60px; }
.c2 { width: 57px; }
.c3 { width: 63px; }
.annotation { width: 157px; }
.dimn { width: 53px; }
.annotation .col { margin-left: 3px; }
.layers { width: 228px; }
.lp { width: 46px; }
.stack { display: flex; flex: 1; flex-direction: column; margin: 0 2px 0 3px; }
.combo { display: flex; flex: 1; align-items: center; gap: 1px; height: 19px; padding: 0 2px 0 5px; background: #4b566a; border: 1px solid #323b49; }
.combo select { flex: 1; min-width: 0; appearance: none; }
.combo.color { gap: 4px; }
.swatch { width: 13px; height: 13px; background: #fff; }
.sample { flex: none; width: 53px; height: 1px; background: #c3c7cd; }
.combo.layer { flex: none; gap: 4px; height: 18px; margin: 1px 0; padding-left: 3px; }
.layer svg { width: 12px; height: 14px; }
.toolrow { display: flex; gap: 6px; padding-left: 2px; }
.block { width: 134px; }
.ins { width: 30px; }
.block .col { margin-left: 3px; }
.props { width: 221px; }
.proprow { display: flex; align-items: center; gap: 2px; height: 20px; }
.groups { width: 57px; }
.groups .sm { justify-content: center; width: 20px; }
.groups .hot { height: 19px; background: #23527c; border: 1px solid #62a8df; }
.groups .body { padding-left: 1px; }
.utils { width: 81px; }
.meas { width: 54px; }
.utils .col { margin-left: 4px; }
.clip { width: 76px; }
.clip .body { padding-left: 5px; }
.clip .col { margin-left: 8px; }
.view { width: 52px; border-right: 0; }
.view .body { padding-left: 9px; }

/* file tabs */
.files { display: flex; flex: none; align-items: center; height: 26px; padding: 2px 0 0 13px; border-bottom: 3px solid #3b4453; }
.burger svg { width: 14px; height: 12px; }
.slash { width: 1px; height: 12px; background: #4a525d; transform: rotate(25deg); }
.files .slash { margin: 0 10px; }
.files .slash + button { margin-left: -1px; }
.active {
  display: flex; align-items: center; gap: 5px; height: 100%; margin-left: 5px; padding: 0 9px 0 14px;
  background: #3b4453; font-weight: 700; clip-path: polygon(10% 0, 100% 0, 90% 100%, 0 100%);
}
.active svg { width: 8px; height: 8px; }
.add { margin-left: 6px; }
.add svg { width: 12px; height: 12px; }

/* drawing area */
.canvas { position: relative; flex: 1; min-height: 0; overflow: hidden; }
.grid { position: absolute; background: #262e38; }
.v { top: 0; bottom: 0; width: 1px; }
.a { left: 14.2%; }
.b { left: 56.1%; }
.c { left: 98.05%; }
.h { left: 0; right: 0; top: 62.4%; height: 1px; }
.viewlabel { position: absolute; left: 3px; top: 4px; display: flex; }
.viewwin { position: absolute; right: 9px; top: 8px; display: flex; gap: 8px; }
.viewwin svg { width: 9px; height: 9px; }
.line { position: absolute; left: 22.25%; right: 25.5%; top: 43.2%; height: 1px; background: #d5d7d9; }
.cube {
  position: absolute; right: 19px; top: 38px; width: 100px; height: 100px;
  border: 11px solid #434a54; border-radius: 50%; color: #b5b8bc;
  font: 700 17px/18px "Liberation Sans", sans-serif;
}
.cube span { position: absolute; width: 18px; text-align: center; }
.n { left: 30px; top: -16px; }
.s { left: 30px; top: 78px; }
.w { left: -17px; top: 31px; }
.e { left: 77px; top: 31px; }
.top {
  position: absolute; left: 18px; top: 18px; justify-content: center; width: 43px; height: 43px;
  background: #a3a6ac; border: 8px solid #b0b2b5; color: #4b5059;
  font: 700 10px/14px "Open Sans", sans-serif;
}
.wcs { position: absolute; right: 49px; top: 161px; gap: 4px; width: 40px; height: 15px; padding: 0 4px; border-radius: 3px; background: #9da0a7; color: #50565f; font-size: 9px; }
.wcs svg { width: 8px; height: 6px; }
.navbar { position: absolute; right: 3px; top: 197px; border-radius: 3px; background: #5f656e; }
.navbar svg { width: 27px; height: 177px; }
.cross { position: absolute; right: 0; bottom: 83px; width: 59px; height: 82px; }
.ucs { position: absolute; left: 8px; bottom: 11px; width: 70px; height: 64px; }

/* command line */
.command { display: flex; flex: none; height: 56px; border-top: 3px solid #3f4858; border-bottom: 4px solid #3b4453; background: #2b3342; }
.grip { display: flex; flex: none; flex-direction: column; align-items: center; justify-content: space-between; width: 21px; padding: 3px 2px 3px 0; }
.grip > svg { width: 15px; height: 5px; }
.grip button svg { width: 8px; height: 8px; }
.grip button:last-child svg { width: 13px; height: 13px; }
.console { display: flex; flex: 1; flex-direction: column; }
.console pre { flex: 1; margin: 0; padding: 5px 1px 0; background: #c8c8c8; color: #1c1c1c; font: 10px/13px "DejaVu Sans Mono", monospace; border-bottom: 1px solid #555c66; }
.prompt { display: flex; flex: none; align-items: center; height: 17px; gap: 6px; padding-left: 3px; background: #fff; }
.prompt button { gap: 2px; }
.prompt svg { width: 14px; height: 11px; }
.prompt .caret { background: #555; }
.prompt input { flex: 1; font: italic 10px/14px "DejaVu Sans Mono", monospace; }
.prompt input::placeholder { color: #777; opacity: 1; }

/* status bar */
.status { display: flex; flex: none; justify-content: space-between; height: 25px; padding-bottom: 2px; border-bottom: 1px solid #73777e; }
.layouts { display: flex; align-items: center; padding-left: 13px; }
.layouts .model { height: 19px; margin: 0 5px 0 8px; padding: 0 13px; background: #3b4453; font-weight: 700; clip-path: polygon(12% 0, 100% 0, 88% 100%, 0 100%); }
.layouts .slash { margin: 0 8px; }
.layouts .add { margin-left: 0; }
.modes { display: flex; align-items: center; gap: 2px; padding-right: 3px; }
.modes button { justify-content: center; gap: 7px; height: 19px; padding: 0 2px; background: #2c3543; }
.modes .hl { background: #5b92c8; }
.modes .dd { padding-right: 3px; }
.modes .only { padding: 0 2px; }
.modes .scale { gap: 4px; padding: 0; }
.modes .space { margin-right: 3px; }
.modes .far { margin-left: 2px; }
```
